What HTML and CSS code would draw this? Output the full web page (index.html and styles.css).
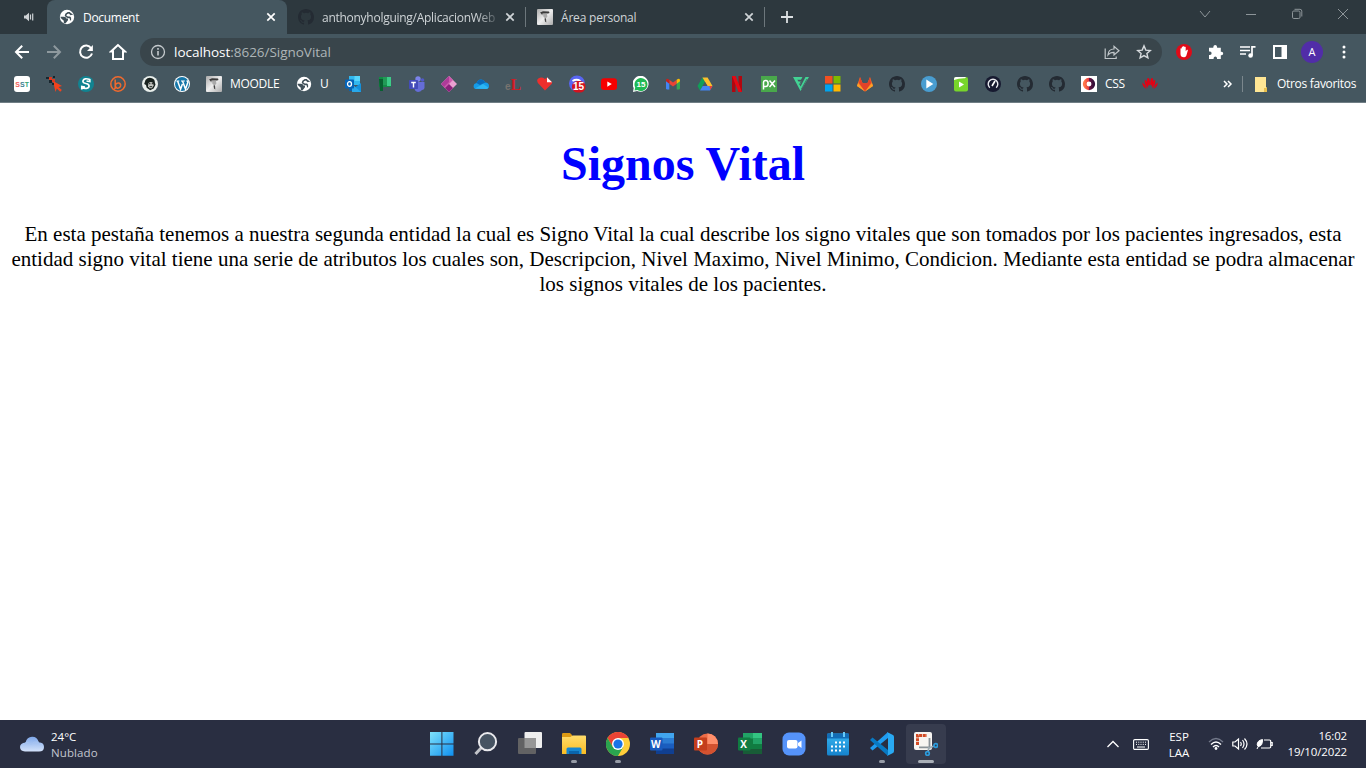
FILE: index.html
```html
<!DOCTYPE html>
<html lang="es">
<head>
<meta charset="utf-8">
<title>Document</title>
<link rel="stylesheet" href="styles.css">
</head>
<body>
<svg class="defs" width="0" height="0" aria-hidden="true">
<defs>
<linearGradient id="gWin" x1="0" y1="0" x2="1" y2="1"><stop offset="0" stop-color="#7fe3fb"/><stop offset="1" stop-color="#0e8ff0"/></linearGradient>
<linearGradient id="gCloud" x1="0" y1="0" x2="0" y2="1"><stop offset="0" stop-color="#7fa8ea"/><stop offset="1" stop-color="#d3e2fa"/></linearGradient>
<linearGradient id="gFold" x1="0" y1="0" x2="0" y2="1"><stop offset="0" stop-color="#ffdc6b"/><stop offset="1" stop-color="#fbbd22"/></linearGradient>
<linearGradient id="gCal" x1="0" y1="0" x2="0" y2="1"><stop offset="0" stop-color="#35b4f0"/><stop offset="1" stop-color="#1683cc"/></linearGradient>
<linearGradient id="gRed" x1="0" y1="0" x2="1" y2="0"><stop offset="0" stop-color="#ff7448"/><stop offset=".5" stop-color="#e5343c"/><stop offset=".51" stop-color="#721544"/><stop offset="1" stop-color="#37103a"/></linearGradient>
<linearGradient id="gPhoto" x1="0" y1="0" x2="1" y2="1"><stop offset="0" stop-color="#aaa"/><stop offset=".5" stop-color="#eee"/><stop offset="1" stop-color="#aaa"/></linearGradient>
</defs>
<symbol id="globe" viewBox="0 0 16 16"><circle cx="8" cy="8" r="7.2" fill="#fff"/><path d="M1.300 7.700H5Q7.300 7.700 7.300 9.500H9v1.700L6.600 14.300 4.800 14v-2.300L2 9.200zM14.200 5.500l-2.700.8-1.600-1.800L8 5.200 7.300 6.500l1.600 1h2.200l1 1.300v2.500l-1.200.3V9.600l-3-.8L5.700 7l.6-2.300L8.700 3h2.100l.9 1z" fill="#3f4f58"/></symbol>
<symbol id="github" viewBox="0 0 16 16"><path d="M8 0C3.58 0 0 3.58 0 8c0 3.54 2.29 6.53 5.47 7.59.4.07.55-.17.55-.38 0-.19-.01-.82-.01-1.49-2.01.37-2.53-.49-2.69-.94-.09-.23-.48-.94-.82-1.13-.28-.15-.68-.52-.01-.53.63-.01 1.08.58 1.23.82.72 1.21 1.87.87 2.33.66.07-.52.28-.87.51-1.07-1.78-.2-3.64-.89-3.64-3.95 0-.87.31-1.59.82-2.15-.08-.2-.36-1.02.08-2.12 0 0 .67-.21 2.2.82a7.6 7.6 0 0 1 4 0c1.53-1.04 2.2-.82 2.2-.82.44 1.1.16 1.92.08 2.12.51.56.82 1.27.82 2.15 0 3.07-1.87 3.75-3.65 3.95.29.25.54.73.54 1.48 0 1.07-.01 1.93-.01 2.2 0 .21.15.46.55.38A8 8 0 0 0 16 8c0-4.42-3.58-8-8-8z" fill="#242b33"/></symbol>
<symbol id="photo" viewBox="0 0 16 16"><rect width="16" height="16" rx="1" fill="url(#gPhoto)"/><path d="m3 3.500 3-1.300 6 .4.5 1.300-1.500.6H5.500l-.3 2-.7-1.500z" fill="#3b3b3b"/><path d="m6 5 4-.3.4 3L8.500 9.500 6.500 8z" fill="#aaa"/><path d="m7.500 9.500 1.500-.3.300 4.300-1.300-1z" fill="#444"/></symbol>
<symbol id="x" viewBox="0 0 10 10"><path d="m1.3 1.3 7.4 7.4m0-7.4L1.3 8.7" stroke="currentColor" stroke-width="1.7"/></symbol>
</svg>

<header class="browser">
  <div class="tabs">
    <div class="tab pinned"><svg width="12" height="10" viewBox="0 0 12 10"><path d="M1 3.4h1.8L6 .8v8.4L2.8 6.6H1z" fill="#cfd3d6"/><path d="M7.5 2.6v4.8M9.7 1.4v7.2" stroke="#cfd3d6" stroke-width="1.2"/></svg></div>
    <div class="tab active"><svg class="fav"><use href="#globe"/></svg><span class="tab-title">Document</span><svg class="close"><use href="#x"/></svg></div>
    <div class="tab second"><svg class="fav"><use href="#github"/></svg><span class="tab-title fade">anthonyholguing/AplicacionWeb</span><svg class="close"><use href="#x"/></svg></div>
    <div class="tab third"><svg class="fav"><use href="#photo"/></svg><span class="tab-title">Área personal</span><svg class="close"><use href="#x"/></svg></div>
    <svg class="plus" width="12" height="12" viewBox="0 0 12 12"><path d="M6 0v12M0 6h12" stroke="#dce0e2" stroke-width="1.8"/></svg>
    <div class="window-buttons">
      <svg width="12" height="12" viewBox="0 0 12 12"><path d="m1 3 5 6 5-6"/></svg>
      <svg width="12" height="12" viewBox="0 0 12 12"><path d="M1 6.5h10"/></svg>
      <svg width="12" height="12" viewBox="0 0 12 12"><rect x="1.5" y="3" width="7.5" height="7.5" rx="1.3"/><path d="M3.5 1.3H9q1.8 0 1.8 1.8v5.4"/></svg>
      <svg width="12" height="12" viewBox="0 0 12 12"><path d="m1 1 10 10m0-10L1 11"/></svg>
    </div>
  </div>

  <div class="toolbar">
    <div class="nav">
      <svg width="16" height="16" viewBox="0 0 16 16"><path d="M15 8H2m6.2-6.2L2 8l6.2 6.2" fill="none" stroke="#fff" stroke-width="2"/></svg>
      <svg width="16" height="16" viewBox="0 0 16 16"><path d="M1 8h13M7.8 1.8 14 8l-6.2 6.2" fill="none" stroke="#8e999e" stroke-width="2"/></svg>
      <svg width="16" height="16" viewBox="0 0 16 16"><path d="M13.2 4.2A6.1 6.1 0 1 0 14 9.5" fill="none" stroke="#fff" stroke-width="2"/><path d="M14.9 1v6H9z" fill="#fff"/></svg>
      <svg width="18" height="18" viewBox="0 0 18 18"><path d="M9 2 2 8.6h2V16h10V8.600h2z" fill="none" stroke="#fff" stroke-width="2"/></svg>
    </div>
    <div class="address">
      <svg width="16" height="16" viewBox="0 0 16 16"><circle cx="8" cy="8" r="6.5" fill="none" stroke="#c5cacd" stroke-width="1.3"/><path d="M8 7v4.500M8 4v1.700" stroke="#c5cacd" stroke-width="1.6"/></svg>
      <span class="url"><b>localhost</b>:8626/SignoVital</span>
      <svg class="share" width="16" height="16" viewBox="0 0 16 16"><path d="M1.200 4.500v10h11v-2" fill="none" stroke="#c0c6c9" stroke-width="1.200"/><path d="M4 11c.2-4 2.300-6 6-6V2.300L15 6.700 10 11V8.300Q6 8.200 4 11z" fill="none" stroke="#c0c6c9" stroke-width="1.200"/></svg>
      <svg width="16" height="16" viewBox="0 0 16 16"><path d="m8 1.900 1.800 4.200 4.500.4-3.400 3 1 4.400L8 11.600l-3.900 2.300 1-4.400-3.400-3 4.500-.4z" fill="none" stroke="#d6dadd" stroke-width="1.400"/></svg>
    </div>
    <div class="extensions">
      <svg width="16" height="16" viewBox="0 0 16 16"><circle cx="8" cy="8" r="8" fill="#e00a18"/><path d="M4.500 9V4.600q.7-.8 1.300 0V3q.7-.8 1.300 0v-.5q.7-.8 1.300 0V3q.7-.7 1.300 0v4.200l1.200-1.500q1.300-.3 1 .6L10.300 11.800Q9.400 13.300 8 13.300 4.500 13.300 4.500 10z" fill="#fff"/></svg>
      <svg width="16" height="16" viewBox="0 0 16 16"><path d="M1 3.700h4.300V3q.2-2 1.900-2t1.900 2v.7h3.700v4h.6q1.800.2 1.800 1.800t-1.800 1.800h-.6V15H9v-1q-.2-1.500-1.700-1.500T5.600 14v1H1v-4h1q1.600-.2 1.600-1.700T2 7.600H1z" fill="#fff"/></svg>
      <svg width="16" height="16" viewBox="0 0 16 16"><path d="M0 3h10M0 6.500h10M0 10h6" stroke="#fff" stroke-width="1.700"/><path d="M12 11V2.800h3.500" fill="none" stroke="#fff" stroke-width="1.700"/><circle cx="10.600" cy="11.500" r="2.300" fill="#fff"/></svg>
      <svg width="16" height="16" viewBox="0 0 16 16"><path d="M2 2h12v12H2z" fill="none" stroke="#fff" stroke-width="2"/><path d="M9.500 2H14v12H9.500z" fill="#fff"/></svg>
      <span class="avatar">A</span>
      <svg width="16" height="16" viewBox="0 0 16 16" fill="#fff"><circle cx="8" cy="3" r="1.500"/><circle cx="8" cy="8" r="1.500"/><circle cx="8" cy="13" r="1.500"/></svg>
    </div>
  </div>

  <div class="bookmarks">
    <svg viewBox="0 0 16 16"><rect width="16" height="16" rx="3" fill="#fff"/><text x="1.300" y="10.800" class="sst"><tspan fill="#ef5d58">S</tspan><tspan fill="#397f91">S</tspan><tspan fill="#35a475">T</tspan></text></svg>
    <svg viewBox="0 0 16 16"><path d="m7 5 9 5-3.500 1 3.400 3-1.700 1.800-3.400-3.200L9.500 16z" fill="#f4421c"/><path d="M0 1h3v2H0zM3 4h3v3H3zM7 0h2v2H7zM6 7h2v2H6z" fill="#18262e"/><path d="M3 1h3v3H3zM6 3h3v3H6z" fill="#d83a20"/></svg>
    <svg viewBox="0 0 16 16"><circle cx="8" cy="8" r="8" fill="#118391"/><path d="M12 3.500q-6-2-7 1.200C4.500 6.500 6 7 8 7.500c4.500 1 3.500 4.300.5 4.800-1.500.2-3.500 0-5-.8M11.800 3v2.500L8.500 5M3.800 13.500V10.500L7 11" fill="none" stroke="#fff" stroke-width="1.700"/></svg>
    <svg viewBox="0 0 16 16"><circle cx="8" cy="8" r="7.200" fill="none" stroke="#f16a2e" stroke-width="1.500"/><path d="M5.200 3.500v8.700l-1 1M5.300 9q1-2.500 3.500-2 2.300.7 1.800 3-.8 2.600-3.300 2.200Q5.500 11.700 5.300 9" fill="none" stroke="#f16a2e" stroke-width="1.500"/></svg>
    <svg viewBox="0 0 16 16"><circle cx="8" cy="8" r="8" fill="#e9efec"/><path d="M3.500 4Q6 1 10 2.200q3 1 2.800 4l.7 2.600-1.900 3.700-3.400 1.700-3.500-2.400L4 9 2.200 8z" fill="#18221f"/><path d="M6.500 7q2.500-2 4.500 0l.6 2.500-1.600 2.800H7.500l-1.500-2z" fill="#c4c7c2"/><circle cx="7.800" cy="7.700" r=".6"/><circle cx="10.300" cy="7.700" r=".6"/><path d="M7.500 10.700h2.700" stroke="#18221f"/></svg>
    <svg viewBox="0 0 16 16"><circle cx="8" cy="8" r="8" fill="#fff"/><circle cx="8" cy="8" r="7" fill="#1677a9"/><path d="M2.300 5h3M7 5h3.800" stroke="#fff" stroke-width="1"/><path d="m3.600 5 3 8.300L8.400 8M8.500 5l3 8L14 6l-1.300-1.500" fill="none" stroke="#fff" stroke-width="1.500"/></svg>
    <svg><use href="#photo"/></svg><span class="label moodle">MOODLE</span>
    <svg><use href="#globe"/></svg><span class="label u">U</span>
    <svg viewBox="0 0 16 16"><path d="M4 0h11v9H4z" fill="#32b8ee"/><path d="M9.500 0H15v5H9.500z" fill="#56d5fc"/><path d="M4 7h5v8H4z" fill="#0a62ad"/><path d="m16 7-9 6.500V16h9z" fill="#1491dc"/><path d="m7 8 9 8H7z" fill="#28a8eb"/><rect y="3.500" width="9" height="9" rx=".8" fill="#0564b8"/><ellipse cx="4.500" cy="8" rx="2" ry="2.300" fill="none" stroke="#fff" stroke-width="1.300"/></svg>
    <svg viewBox="0 0 16 16"><path d="M2 1h12v10H2z" fill="#128b45"/><path d="M6 1h4v8H6z" fill="#219a56"/><path d="M10 1h4v9h-4z" fill="#3dcc88"/><path d="M2 3h4v12H3z" fill="#086030"/></svg>
    <svg viewBox="0 0 16 16"><circle cx="9" cy="3" r="2.700" fill="#7b83eb"/><circle cx="13.500" cy="4" r="1.800" fill="#5059c9"/><path d="M6 6h9.500v6q-.5 2-2.500 2-1.500 2-4 2-3.500-.5-3.500-4z" fill="#656dd8"/><rect y="4" width="9" height="9" rx=".8" fill="#444cba"/><path d="M2.200 6.500h4.600M4.500 6.500v5" stroke="#fff" stroke-width="1.400"/></svg>
    <svg viewBox="0 0 16 16"><path d="m8 0 8 8-8 8-8-8z" fill="#eaa0d2"/><path d="M8 0v8L4 12 0 8z" fill="#af3b99"/><path d="m8 0 4 4-8 8-1-1 5-5z" fill="#cf5aae"/><path d="m4 12 4-4 4 4-4 4z" fill="#8d207c"/></svg>
    <svg viewBox="0 0 16 16"><path d="M1 12Q-.5 8 3.500 7 6 1.700 10.800 4.500l1.500 2.100Q16 7 16 10q0 3-3 3H3q-1.300 0-2-1z" fill="#159be8"/><path d="M3.500 7Q6 1.700 10.800 4.500l1.500 2.100L7 9z" fill="#0b69b8"/><path d="m2 12.500 8-4.500 5.400 3.500Q14.500 13 13 13z" fill="#2db6f3"/></svg>
    <svg viewBox="0 0 16 16" class="overflow"><text x="0" y="13.500" class="el-e">e</text><text x="5.500" y="13.500" class="el-l">L</text></svg>
    <svg viewBox="0 0 16 16"><path d="M8 14.500.9 7Q-.8 4 1.300 2.500 4.600.5 8 3l2-1.600L15 6q.4 1-.4 2z" fill="#ed2f2d"/><path d="m10 1.300 5 5H10z" fill="#fff"/></svg>
    <svg viewBox="0 0 16 16" class="overflow"><circle cx="8" cy="7.500" r="8" fill="#5865f2"/><path d="M3.500 5q4-2.500 8 0" fill="none" stroke="#fff" stroke-width="1.800"/><rect x="3" y="5" width="13.500" height="11.500" rx="5.500" fill="#d3131e"/><text x="4" y="14.400" class="badge">15</text></svg>
    <svg viewBox="0 0 16 16"><rect y="2.300" width="16" height="11.600" rx="3" fill="#f60000"/><path d="m6.300 5.500 4.500 2.600-4.500 2.600z" fill="#fff"/></svg>
    <svg viewBox="0 0 16 16"><path d="m0 16 .7-4A8 8 0 1 1 4 15z" fill="#fff"/><path d="m1.500 14.500.7-3A6.500 6.500 0 1 1 4.500 14z" fill="#20b954"/><text x="3.500" y="10.800" class="wa">15</text></svg>
    <svg viewBox="0 0 16 16"><path d="M1 4.500 4.300 7v6.500H2.200Q1 13.500 1 12.300z" fill="#4285f4"/><path d="M15 4.500 11.700 7v6.500h2.100q1.200 0 1.200-1.200z" fill="#34a853"/><path d="M4.300 3.800 8 6.600l3.700-2.800v4L8 10.600 4.300 7.800z" fill="#ea4335"/><path d="M1 4.200Q1.300 1.600 4.300 3.700v4.100L1 5.300z" fill="#c5221f"/><path d="M15 4.200q-.3-2.600-3.300-.5v4.100L15 5.300z" fill="#fbbc04"/></svg>
    <svg viewBox="0 0 16 16"><path d="m5.400 1.500 2.600 4.500-5 8.500L.5 10z" fill="#109e58"/><path d="M5.400 1.500h5.200L15.500 10h-5z" fill="#fbc02d"/><path d="m3 14.500 2.700-4.500h9.800L13 14.500z" fill="#4285f4"/><path d="m12.500 10h3L13.200 14z" fill="#ea4335"/><path d="m8 6 2.400 4H5.700z" fill="#455760"/></svg>
    <svg viewBox="0 0 16 16"><path d="M3 0h3.500v16H3zM9.500 0H13v16H9.500z" fill="#b2070f"/><path d="M3 0h3.500L13 16H9.500z" fill="#e50914"/></svg>
    <svg viewBox="0 0 16 16"><rect width="16" height="16" fill="#49a84b"/><path d="M2.500 13.500V6.500q0-2 2.300-2t2.300 3-2.300 3H3M8.500 4.500l5.500 6.500M14 4.500 8.500 11" fill="none" stroke="#fff" stroke-width="1.500"/></svg>
    <svg viewBox="0 0 16 16"><path d="M0 1h9.500L8 3.800H4.300l1.200 1.700h3L7.300 8.300H6.400l1.200 2.200L12.500 1H16L7.500 15z" fill="#42d394"/><path d="m10.500 1-4 7.500M14 3 8.500 13" stroke="#465760" stroke-width=".8"/></svg>
    <svg viewBox="0 0 16 16"><path d="M0 0h7.500v7.500H0z" fill="#f25022"/><path d="M8.500 0H15.500v7.500h-7z" fill="#7fba00"/><path d="M0 8.500h7.500v7H0z" fill="#00a4ef"/><path d="M8.500 8.500h7v7h-7z" fill="#ffb900"/></svg>
    <svg viewBox="0 0 16 16"><path d="M3 1 0 10l8 5.500L16 10l-3-9-2.500 6h-5z" fill="#fc6d26"/><path d="m3 1 2.500 6h5L13 1l1 6-6 8.500L2 7z" fill="#e24329"/><path d="m0 10 1-3 7 8.500L15 7l1 3-8 5.500z" fill="#fca326"/></svg>
    <svg><use href="#github"/></svg>
    <svg viewBox="0 0 16 16"><circle cx="8" cy="8" r="8" fill="#499dd0"/><path d="m5.300 3.600 7 4.400-7 4.400z" fill="#fff"/></svg>
    <svg viewBox="0 0 16 16"><rect x="1" y="1" width="14" height="14.500" rx="2" fill="#78d52b"/><path d="M1 4V3q0-2 2-2h10l-1 1.200Q6 2 1 4z" fill="#fff"/><path d="m6 5.400 5 3-5 3z" fill="#fff"/></svg>
    <svg viewBox="0 0 16 16"><circle cx="8" cy="8" r="8" fill="#171a30"/><path d="M4.800 11.700a4.800 4.800 0 1 1 6.400 0" fill="none" stroke="#e7e8ed" stroke-width="1.400"/><path d="m7 10 3-5" stroke="#fff" stroke-width="1.600"/></svg>
    <svg><use href="#github"/></svg><svg><use href="#github"/></svg>
    <svg viewBox="0 0 16 16"><path d="M0 0h16v16H0z" fill="#fff"/><circle cx="8" cy="8" r="4.300" fill="none" stroke="url(#gRed)" stroke-width="3.700"/></svg><span class="label css">CSS</span>
    <svg viewBox="0 0 16 16"><g fill="#e60012"><ellipse cx="6.500" cy="5.800" rx="1.400" ry="3.800" transform="rotate(-6 6.500 5.800)"/><ellipse cx="9.700" cy="5.800" rx="1.400" ry="3.800" transform="rotate(6 9.700 5.800)"/><path d="M3.500 3.500Q1 7 5.800 12 6.500 7 3.500 3.500zM12.500 3.500Q15 7 10.200 12 9.500 7 12.500 3.500zM.5 6.500Q-.3 10 4.800 13 4 9 .5 6.500zM15.500 6.500q.8 3.500-4.300 6.500.8-4 4.300-6.500z"/></g></svg>
    <div class="other"><svg class="chev" viewBox="0 0 10 8"><path d="m1 1 3 3-3 3m4-6 3 3-3 3" fill="none" stroke="#fff" stroke-width="1.500"/></svg><i></i><svg class="folder" viewBox="0 0 12 15"><path d="M0 0h11v10l1 1v4H0z" fill="#ffe694"/><path d="M9 11h2v-1l1 1v4H9z" fill="#e9bf4d"/></svg><span class="label fav-label">Otros favoritos</span></div>
  </div>
</header>

<main class="page">
  <h1>Signos Vital</h1>
  <p>En esta pestaña tenemos a nuestra segunda entidad la cual es Signo Vital la cual describe los signo vitales que son tomados por los pacientes ingresados, esta entidad signo vital tiene una serie de atributos los cuales son, Descripcion, Nivel Maximo, Nivel Minimo, Condicion. Mediante esta entidad se podra almacenar los signos vitales de los pacientes.</p>
</main>

<footer class="taskbar">
  <div class="weather"><svg width="24" height="16" viewBox="0 0 24 16"><path d="M5 15.500Q0 15 0 11t5.500-4.500Q7 1 12 .8t6.800 5.400Q24 6.500 24 11t-5 4.500z" fill="url(#gCloud)"/><path d="M5.500 6.500q3-1 5.500 2 3-3.500 7.800-2.300" fill="none" stroke="#a7c4f2"/></svg><div><span class="temp">24°C</span><span class="cond">Nublado</span></div></div>
  <div class="apps">
    <div class="app"><svg viewBox="0 0 24 24"><path d="M0 0h11.400v11.400H0zM12.400 0H23.500v11.400H12.400zM0 12.400h11.400v11.400H0zM12.400 12.400h11.100v11.400H12.400z" fill="url(#gWin)"/></svg></div>
    <div class="app"><svg viewBox="0 0 24 24"><path d="m8 15-6.500 7" stroke="#c2c4c9" stroke-width="3"/><circle cx="13.500" cy="9.700" r="8.600" fill="#465362" stroke="#e9e9ed" stroke-width="2"/></svg></div>
    <div class="app"><svg viewBox="0 0 24 24"><rect x="6.500" y="0" width="17.500" height="16" rx="1" fill="#eee"/><rect x="0" y="6" width="18" height="16" rx="1" fill="#626263"/><path d="M6.500 6H18v10H6.500z" fill="#969696"/></svg></div>
    <div class="app running"><svg viewBox="0 0 24 24"><path d="M0 2.200Q0 1 1.200 1H8l2 2v4H0z" fill="#dd9a13"/><path d="M0 5h8.500l2-1.500H23q1 0 1 1V22H0z" fill="url(#gFold)"/><path d="M4.500 22v-5q0-1.500 1.500-1.500h12q1.500 0 1.500 1.500v5z" fill="#1687d1"/><path d="M7 19h10v3H7z" fill="#0a65ac"/></svg></div>
    <div class="app running"><svg viewBox="0 0 24 24"><circle cx="12" cy="12" r="12" fill="#ffce3a"/><path d="M1.600 6A12 12 0 0 1 22.400 6H12L6.800 15z" fill="#ea4335"/><path d="M1.600 6A12 12 0 0 0 12 24l5.200-9H6.800z" fill="#2aa44f"/><circle cx="12" cy="12" r="6" fill="#fff"/><circle cx="12" cy="12" r="4.600" fill="#1a73e8"/></svg></div>
    <div class="app"><svg viewBox="0 0 24 24"><path d="M6 1h18v21H6z" fill="#1a5dbe"/><path d="M6 1h18v5H6z" fill="#41a5ee"/><path d="M6 6h18v5.500H6z" fill="#2b7cd3"/><path d="M6 16.500h18V22H6z" fill="#103f91"/><rect y="5.500" width="12.500" height="13" rx="1" fill="#185abd"/><text x="1" y="15.500" class="office">W</text></svg></div>
    <div class="app"><svg viewBox="0 0 24 24"><circle cx="13.500" cy="12" r="10.500" fill="#ed6c47"/><path d="M13.500 1.500A10.500 10.500 0 0 1 24 12H13.500z" fill="#ff8f6b"/><path d="M3 12h21a10.500 10.500 0 0 1-21 0" fill="#d35230"/><rect y="5.500" width="13" height="13" rx="1" fill="#c43e1c"/><text x="2.700" y="15.500" class="office">P</text></svg></div>
    <div class="app"><svg viewBox="0 0 24 24"><path d="M5 1h19v21H5z" fill="#107c41"/><path d="M5 1h10v5.500H5z" fill="#21a366"/><path d="M15 1h9v5.500h-9z" fill="#33c481"/><path d="M15 6.500h9V12h-9z" fill="#21a366"/><path d="M5 17h19v5H5z" fill="#185c37"/><rect y="5.500" width="12.500" height="13" rx="1" fill="#107c41"/><text x="2.300" y="15.500" class="office">X</text></svg></div>
    <div class="app"><svg viewBox="0 0 24 24"><rect x=".5" y=".5" width="23" height="23" rx="6.500" fill="#5593fa"/><rect x="5" y="8" width="10.500" height="8.500" rx="2" fill="#fff"/><path d="m16 11 3.500-2.500v7.500L16 13.500z" fill="#fff"/></svg></div>
    <div class="app"><svg viewBox="0 0 24 24"><rect x="1" y="1.500" width="22" height="22" rx="1.500" fill="url(#gCal)"/><path d="M1 1.500h22v5H1z" fill="#126db6"/><path d="M6 0v5M18 0v5" stroke="#68cbf8" stroke-width="2"/><path d="M9 10.500h11M5 14.500h15M5 18.500h11" stroke="#fff" stroke-width="2" stroke-dasharray="2"/></svg></div>
    <div class="app running"><svg viewBox="0 0 24 24"><path d="m0 16 2.500 2.500L18 6V0z" fill="#1f9cf0"/><path d="m0 8 2.500-2.500L18 18v6z" fill="#0879c3"/><path d="m17 0 6 3q1 .4 1 2v14q0 1.600-1 2l-6 3q1-1 1-2V2q0-1-1-2" fill="#29a9f2"/></svg></div>
    <div class="app current"><svg viewBox="0 0 24 24"><rect width="18" height="18" rx="2" fill="#f7f4f1"/><path d="M3.500 13V3.500H13" fill="none" stroke="#d24a24" stroke-width="3" stroke-dasharray="3 .7"/><path d="M5 15.300h10.500V6" fill="none" stroke="#8a9197" stroke-width="1.800"/><path d="m20 14-6 2.500M14 20l1-5" stroke="#9daab2" stroke-width="1.700"/><circle cx="21.800" cy="13.500" r="1.800" fill="none" stroke="#2c9bdc" stroke-width="1.700"/><circle cx="13.500" cy="21.500" r="1.800" fill="none" stroke="#2c9bdc" stroke-width="1.700"/></svg></div>
  </div>
  <div class="tray">
    <svg width="12" height="8" viewBox="0 0 12 8"><path d="m.5 7 5.500-5.500L11.500 7" fill="none" stroke="#fff" stroke-width="1.300"/></svg>
    <svg class="keyboard" width="16" height="11" viewBox="0 0 16 11"><rect x=".6" y=".6" width="14.800" height="9.800" rx="1.200" fill="none" stroke="#fff" stroke-width="1.100"/><path d="M3 3.200h10M3 5.400h10" stroke="#fff" stroke-dasharray="1 1.250"/><path d="M4 8h8" stroke="#fff"/></svg>
    <div class="language"><span>ESP</span><span>LAA</span></div>
    <svg class="wifi" width="16" height="14" viewBox="0 0 16 14"><path d="M1 5Q8-2 15 5" fill="none" stroke="#73798a" stroke-width="1.300"/><path d="M3 7.500q5-5 10 0M5 10q3-3 6 0" fill="none" stroke="#fff" stroke-width="1.400"/><circle cx="8" cy="11.500" r="1.400" fill="#fff"/></svg>
    <svg width="16" height="14" viewBox="0 0 16 14"><path d="M.8 5H3l3.500-3v10L3 9H.8zM8.500 5q1.500 2 0 4M10.500 3q3 4 0 8M12.500 1.500q5 5.500 0 11" fill="none" stroke="#fff" stroke-width="1.200"/></svg>
    <svg width="17" height="14" viewBox="0 0 17 14"><path d="M8 3h5.500Q14.700 3 14.700 4.200v5.600q0 1.200-1.200 1.200H5M14.700 5.500h1.500v3h-1.500" fill="none" stroke="#fff" stroke-width="1.200"/><path d="M6.500 2.500Q1 3.500 1.200 8L2.300 9.500Q6.800 9 6.500 2.500zM2.500 9 1 12" fill="#fff" stroke="#fff" stroke-width="1"/></svg>
    <div class="clock"><span>16:02</span><span>19/10/2022</span></div>
  </div>
</footer>
</body>
</html>
```
FILE: styles.css
```css
* { box-sizing: border-box; }
body { margin: 0; height: 768px; overflow: hidden; display: flex; flex-direction: column; background: #fff; font-family: "Open Sans", "Noto Sans", sans-serif; }
svg { display: block; flex: none; }
.defs { position: absolute; }
.browser { height: 103px; flex: none; background: #455760; border-bottom: 1px solid #707e85; color: #fff; }

.tabs { height: 34px; display: flex; background: #2d383e; }
.tab { height: 34px; display: flex; align-items: center; color: #cfd4d7; font-size: 12px; }
.pinned { width: 47px; padding-left: 23px; }
.active { width: 240px; padding: 0 11px 0 12px; background: #455760; color: #fff; border-radius: 8px 8px 0 0; }
.second { width: 239px; padding: 0 11px; }
.third { width: 239px; padding: 0 11px; }
.second, .third { background: linear-gradient(#6d777c, #6d777c) right 7px / 1px 20px no-repeat; }
.fav { width: 16px; height: 16px; }
.tab-title { flex: 1; margin-left: 8px; white-space: nowrap; letter-spacing: -.2px; }
.active .tab-title { letter-spacing: -.3px; }
.fade { letter-spacing: -.27px; margin-right: 8px; -webkit-mask-image: linear-gradient(90deg, #000 88%, #0003); mask-image: linear-gradient(90deg, #000 88%, #0003); }
.close { width: 10px; height: 10px; }
.plus { margin: 11px 0 0 16px; }
.window-buttons { display: flex; gap: 34px; margin-left: auto; padding: 8px 17px 0 0; }
.window-buttons svg { fill: none; stroke: #8d9599; stroke-width: 1; }

.toolbar { height: 32px; padding-top: 4px; display: flex; align-items: center; }
.nav { width: 140px; padding-left: 14px; display: flex; align-items: center; gap: 16px; }
.nav svg:last-child { margin-left: -1px; }
.address { width: 1022px; height: 28px; border-radius: 14px; background: #39454b; padding: 0 10px; display: flex; align-items: center; }
.url { margin-left: 8px; font-size: 13.5px; color: #aeb5b8; letter-spacing: -.03px; }
.url b { font-weight: 400; color: #fff; }
.share { margin: 0 16px 0 auto; }
.extensions { flex: 1; padding: 0 14px; display: flex; align-items: center; justify-content: space-between; }
.avatar { width: 22px; height: 22px; margin: 0 -3px; border-radius: 50%; background: #512da8; text-align: center; line-height: 22px; font-size: 11px; }

.bookmarks { height: 36px; padding: 0 10px 0 14px; display: flex; align-items: center; gap: 16px; }
.bookmarks > svg { width: 16px; height: 16px; }
.bookmarks > .overflow { overflow: visible; }
.label { font-size: 12px; line-height: 16px; white-space: nowrap; letter-spacing: -.3px; margin-left: -8px; }
.moodle { width: 50px; }
.u { width: 9px; }
.css { width: 21px; }
.other { margin-left: auto; display: flex; align-items: center; }
.chev { width: 10px; height: 8px; }
.other i { width: 1px; height: 16px; margin: 0 12px 0 9px; background: #7b878d; }
.folder { width: 12px; height: 15px; }
.label.fav-label { width: 79px; margin-left: 10px; }
.sst { font: bold 7px "Liberation Sans", sans-serif; }
.el-e { font: bold 10px "Liberation Sans", sans-serif; fill: #77736f; }
.el-l { font: bold 16px "Liberation Serif", serif; fill: #d01c25; }
.badge { font: bold 10px "Liberation Sans", sans-serif; fill: #fff; }
.wa { font: bold 8px "Liberation Sans", sans-serif; fill: #fff; }

.page { flex: 1; text-align: center; font-family: "Liberation Serif", serif; padding: 0 8px; }
h1 { margin: 33px 0 0; font-size: 48px; line-height: 55px; color: #00f; }
p { margin: 31px 0 0; font-size: 21px; line-height: 25px; color: #000; }

.taskbar { height: 48px; flex: none; display: grid; grid-template-columns: 422px 528px 1fr; background: #292e41; color: #fff; font-size: 11.500px; line-height: 16px; }
.weather { display: flex; align-items: center; padding-left: 20px; gap: 7px; }
.weather span, .language span, .clock span { display: block; }
.weather > div { padding-top: 1px; }
.cond { color: #c3c6cf; letter-spacing: .1px; }
.apps { display: flex; gap: 4px; }
.app { width: 40px; height: 40px; margin-top: 4px; padding: 8px; border-radius: 4px; }
.app svg { width: 24px; height: 24px; }
.running::after { content: ""; display: block; width: 6px; height: 3px; margin: 4px auto 0; border-radius: 2px; background: #969ba6; }
.current { background: #373c4e; }
.current::after { content: ""; display: block; width: 16px; height: 3px; margin: 4px auto 0; border-radius: 2px; background: #aab0b8; }
.office { font-size: 10px; font-weight: 700; fill: #fff; }
.tray { display: flex; align-items: center; justify-content: flex-end; padding-right: 19px; gap: 8px; }
.tray .keyboard { margin-left: 6px; }
.language { width: 24px; margin: 1px 9px 0 10px; text-align: center; }
.clock { width: 62px; text-align: right; margin-left: 4px; white-space: nowrap; letter-spacing: -.15px; }
```
